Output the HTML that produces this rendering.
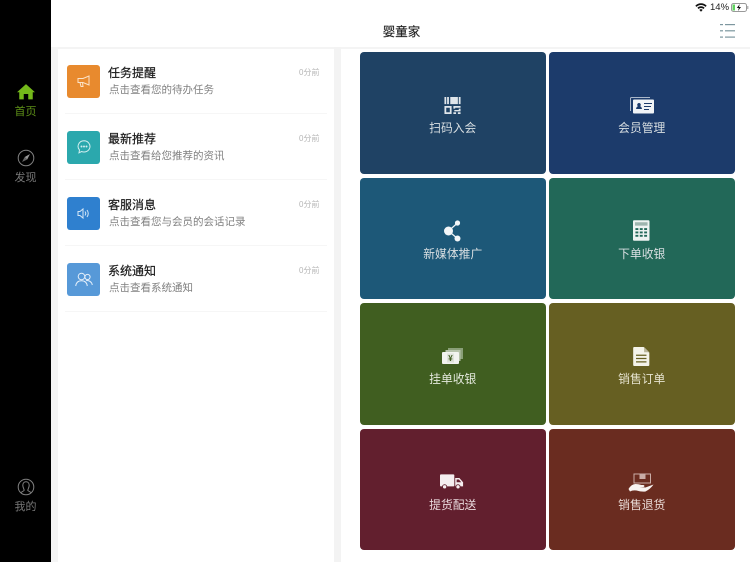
<!DOCTYPE html>
<html lang="zh">
<head>
<meta charset="utf-8">
<style>
*{margin:0;padding:0;box-sizing:border-box}
html{background:#fff}
html,body{width:750px;height:562px;overflow:hidden;font-family:"Liberation Sans","Noto Sans CJK SC",sans-serif}
body{background:#fff;position:relative;filter:blur(.3px)}
.a{position:absolute}
#side{left:0;top:0;width:51px;height:562px;background:#000}
.nav{left:0;width:51px;text-align:center;font-size:11px;line-height:14px;color:#777}
#left{left:51px;top:47px;width:7px;height:515px;background:#f5f5f5}
#midtop{left:51px;top:47px;width:699px;height:1.5px;background:#f4f4f4}
#mid{left:334px;top:47px;width:7px;height:515px;background:#f3f3f3}
.title{left:52px;top:23px;width:699px;text-align:center;font-size:12.5px;line-height:18px;color:#222;-webkit-text-stroke:.15px #222}
.ic{left:67px;width:33px;height:33px;border-radius:3px}
.h{left:108px;font-size:12px;line-height:16px;color:#1a1a1a;-webkit-text-stroke:.2px #1a1a1a}
.s{left:109px;font-size:10.5px;line-height:14px;color:#808080}
.t{left:299px;font-size:8px;line-height:12px;color:#b5b5b5}
.ln{left:65px;width:262px;height:1px;background:#f6f6f6}
.tile{width:185.5px;height:121.5px;border-radius:4px}
.tl{text-align:center;width:185.5px;font-size:11.8px;line-height:16px;color:#d9dfe2;top:68px;left:0}
.tile svg{position:absolute}
</style>
</head>
<body>
<div class="a" id="side"></div>
<svg class="a" style="left:17px;top:84px" width="18" height="15.500" viewBox="0 0 20 17"><path fill="#74b81a" d="M10 0 L20 9 L17.500 9 L17.500 17 L12.500 17 L12.500 11 L7.500 11 L7.500 17 L2.500 17 L2.500 9 L0 9Z"/></svg>
<div class="a nav" style="top:105px;color:#5f9218">首页</div>
<svg class="a" style="left:17px;top:149px" width="18" height="18" viewBox="0 0 18 18"><circle cx="9" cy="9" r="7.800" fill="none" stroke="#808080" stroke-width="1"/><path fill="#999" d="M13 5 L10.200 10.500 L7.700 8Z"/><path fill="#666" d="M5 13 L7.700 8 L10.200 10.500Z"/></svg>
<div class="a nav" style="top:171px">发现</div>
<svg class="a" style="left:17px;top:478px" width="18" height="18" viewBox="0 0 18 18" fill="none" stroke="#808080" stroke-width="1"><circle cx="9" cy="9" r="7.800"/><path d="M7.200 12.500 C7.200 11 5.800 9.500 5.800 7.200 C5.800 5 7.200 3.800 9 3.800 C10.800 3.800 12.200 5 12.200 7.200 C12.200 9.500 10.800 11 10.800 12.500 L14 14.500 M7.200 12.500 L4 14.500"/></svg>
<div class="a nav" style="top:500px">我的</div>

<div class="a" id="midtop"></div>
<div class="a" id="left"></div>
<div class="a" id="mid"></div>
<div class="a title">婴童家</div>

<svg class="a" style="left:695px;top:3px" width="12" height="9" viewBox="0 0 12 9"><path fill="#111" d="M6 8.800 L4.300 6.900 A2.500 2.500 0 0 1 7.700 6.900Z M6 3.200 A5 5 0 0 1 9.600 4.800 L8.500 6 A3.500 3.500 0 0 0 3.500 6 L2.400 4.800 A5 5 0 0 1 6 3.200Z M6 .3 A8 8 0 0 1 11.700 2.700 L10.500 3.900 A6.300 6.300 0 0 0 1.500 3.900 L.3 2.700 A8 8 0 0 1 6 .3Z"/></svg>
<div class="a" style="left:710px;top:1px;font-size:9.500px;line-height:13px;color:#222">14%</div>
<svg class="a" style="left:731px;top:3px" width="18" height="9" viewBox="0 0 18 9"><rect x=".5" y=".5" width="15" height="8" rx="2" fill="#fff" stroke="#999"/><rect x="1.500" y="1.500" width="2.500" height="6" fill="#5fd35f"/><path fill="#111" d="M8.800 1 L5.800 5 L7.800 5 L7 8 L10 4 L8 4Z"/><rect x="16.300" y="3" width="1" height="3" fill="#999"/></svg>

<svg class="a" style="left:720px;top:24px" width="15" height="14" viewBox="0 0 15 14" fill="#7d979f"><rect x="0" y="0" width="3" height="1.200"/><rect x="5" y="0" width="10" height="1.200"/><rect x="0" y="6.200" width="3" height="1.200"/><rect x="5" y="6.200" width="10" height="1.200"/><rect x="0" y="12.500" width="3" height="1.200"/><rect x="5" y="12.500" width="10" height="1.200"/></svg>

<div class="a ic" style="top:64.500px;background:#e88a2e"></div>
<svg class="a" style="left:77px;top:75px" width="14" height="13" viewBox="0 0 14 13" fill="none" stroke="#fbe3c8" stroke-width="1"><path d="M1 3.500 H6 L12 1 V10 L6 7.500 H1Z M3 7.500 L4 11.500 H6 L5.500 7.500"/></svg>
<div class="a h" style="top:65px">任务提醒</div>
<div class="a s" style="top:83px">点击查看您的待办任务</div>
<div class="a t" style="top:67px">0分前</div>
<div class="a ln" style="top:113px"></div>

<div class="a ic" style="top:130.700px;background:#2ba8ad"></div>
<svg class="a" style="left:77px;top:140px" width="14" height="14" viewBox="0 0 14 14" fill="none" stroke="#d2eeef" stroke-width="1"><path d="M7 .8 A6 5.600 0 1 1 4.500 11.500 L2 12.800 L2.500 10 A6 5.600 0 0 1 7 .8Z"/><circle cx="4.500" cy="6.500" r=".5"/><circle cx="7" cy="6.500" r=".5"/><circle cx="9.500" cy="6.500" r=".5"/></svg>
<div class="a h" style="top:131px">最新推荐</div>
<div class="a s" style="top:149px">点击查看给您推荐的资讯</div>
<div class="a t" style="top:133px">0分前</div>
<div class="a ln" style="top:179px"></div>

<div class="a ic" style="top:196.700px;background:#2f80cf"></div>
<svg class="a" style="left:77px;top:206.500px" width="14" height="13" viewBox="0 0 14 13" fill="none" stroke="#d4e6f6" stroke-width="1"><path d="M1 4.500 H3 L6 2 V11 L3 8.500 H1Z M8 4.500 Q9.500 6.500 8 8.500 M10 3 Q12.500 6.500 10 10"/></svg>
<div class="a h" style="top:197px">客服消息</div>
<div class="a s" style="top:215px">点击查看您与会员的会话记录</div>
<div class="a t" style="top:199px">0分前</div>
<div class="a ln" style="top:245px"></div>

<div class="a ic" style="top:262.700px;background:#5799d8"></div>
<svg class="a" style="left:75px;top:272px" width="18" height="15" viewBox="0 0 18 15" fill="none" stroke="#e4effa" stroke-width="1"><circle cx="6.500" cy="4.500" r="3.300"/><circle cx="12.500" cy="5" r="2.600"/><path d="M.7 14 C1.200 10.500 3.500 8.800 6.500 8.800 C9.500 8.800 11.800 10.500 12.300 14 M11 8.700 C14 8 16.800 10 17.300 13"/></svg>
<div class="a h" style="top:263px">系统通知</div>
<div class="a s" style="top:281px">点击查看系统通知</div>
<div class="a t" style="top:265px">0分前</div>
<div class="a ln" style="top:311px"></div>

<div class="a tile" style="left:360px;top:52px;background:#1f4264">
<svg style="left:84px;top:45px" width="17" height="17" viewBox="0 0 18 19" fill="#dfe5ea"><path d="M0 0H2V8H0Z M3 0H5V8H3Z M6.500 0H15V8H6.500Z M16 0H18V8H16Z"/><path fill-rule="evenodd" d="M0 10H8V19H0Z M2 12V17H6V12Z"/><path d="M10 10H18V12H12V13H10Z M16 13H18V16H11V14.500H16Z M10 17H13V19H10Z M15 17H18V19H15Z"/></svg>
<div class="a tl">扫码入会</div></div>

<div class="a tile" style="left:549px;top:52px;background:#1c3b6b">
<svg style="left:81px;top:45px" width="24" height="17" viewBox="0 0 24 17"><path fill="none" stroke="#aab7c9" d="M.5 14 V1.500 Q.5 .5 1.500 .5 H20"/><rect x="3" y="2.500" width="21" height="14" rx="1" fill="#f0f3f6"/><path fill="#1c3b6b" d="M6 12 Q6.500 9.500 8 9.300 A1.800 1.800 0 1 1 10 9.300 Q11.500 9.500 12 12Z M14 6H22V7H14Z M14 9H21V10H14Z M14 12H19V13H14Z"/></svg>
<div class="a tl">会员管理</div></div>

<div class="a tile" style="left:360px;top:177.500px;background:#1d5878">
<svg style="left:84px;top:42.500px" width="17" height="22" viewBox="0 0 17 22" fill="#f3f6f8"><circle cx="4.500" cy="11" r="4.500"/><circle cx="13.500" cy="3" r="2.600"/><circle cx="13.500" cy="18.500" r="3"/><path stroke="#f3f6f8" stroke-width="1.200" d="M4.500 11L13.500 3M4.500 11L13.500 18.500"/></svg>
<div class="a tl">新媒体推广</div></div>

<div class="a tile" style="left:549px;top:177.500px;background:#226858">
<svg style="left:84px;top:42.500px" width="16.500" height="21" viewBox="0 0 17 21"><rect width="17" height="21" rx="1" fill="#eef3f1"/><rect x="2" y="2" width="13" height="3.500" fill="#9db5ae"/><path fill="#226858" d="M2.500 8H5.500V10H2.500Z M7 8H10V10H7Z M11.500 8H14.500V10H11.500Z M2.500 11.500H5.500V13.500H2.500Z M7 11.500H10V13.500H7Z M11.500 11.500H14.500V13.500H11.500Z M2.500 15H5.500V17H2.500Z M7 15H10V17H7Z M11.500 15H14.500V17H11.500Z"/></svg>
<div class="a tl">下单收银</div></div>

<div class="a tile" style="left:360px;top:303px;background:#405e20">
<svg style="left:82px;top:45px" width="21" height="16" viewBox="0 0 21 16"><rect x="6" y="0" width="15" height="11" fill="#8a9f78"/><rect x="3.500" y="2" width="15" height="11" fill="#b7c4ab"/><rect x="0" y="4" width="17" height="12" rx="1" fill="#f2f4ef"/><rect x="5" y="5.500" width="7" height="9" fill="#dfe4da"/><text x="8.500" y="13" text-anchor="middle" font-size="8" font-weight="bold" fill="#405e20">¥</text></svg>
<div class="a tl" style="color:#e3e8dc">挂单收银</div></div>

<div class="a tile" style="left:549px;top:303px;background:#665f22">
<svg style="left:84px;top:44px" width="16.500" height="19" viewBox="0 0 17 20"><path fill="#f4f3ea" d="M0 1 Q0 0 1 0 H11 L17 6 V19 Q17 20 16 20 H1 Q0 20 0 19Z"/><path fill="#b9b59a" d="M11.500 0 L17 5.500 H11.500Z"/><path fill="#665f22" d="M3 8H14V9.300H3Z M3 11.500H14V12.800H3Z M3 15H14V16.300H3Z"/></svg>
<div class="a tl" style="color:#e6e3cf">销售订单</div></div>

<div class="a tile" style="left:360px;top:428.800px;background:#621f2e">
<svg style="left:80px;top:45px" width="24" height="15.500" viewBox="0 0 26 16"><rect x="0" y="0" width="15.500" height="13" rx="1" fill="#f6eef0"/><path fill="#f6eef0" d="M16.500 4H21L25 8.500V13H16.500Z"/><path fill="#621f2e" d="M18 5.500H20.500L23 8.500H18Z"/><circle cx="5" cy="13.500" r="2.300" fill="#f6eef0" stroke="#621f2e"/><circle cx="19.500" cy="13.500" r="2.300" fill="#f6eef0" stroke="#621f2e"/></svg>
<div class="a tl" style="color:#e8d8dc">提货配送</div></div>

<div class="a tile" style="left:549px;top:428.800px;background:#6a2c20">
<svg style="left:79px;top:44px" width="26" height="19" viewBox="0 0 25 19"><path fill="none" stroke="#c9aca6" d="M5.500 1H22V10H5.500Z"/><rect x="11" y="1" width="6" height="5" fill="#c9aca6"/><path fill="#f8f3f1" d="M0 16 Q3 11 7 11 Q10 11 13 12 H15 Q17 13 15 14 H11 L17 14.500 Q21 13 25 11.500 Q22 16 17 18.500 Q13 19 8 17.500 Q4 17 1.500 18.500Z"/></svg>
<div class="a tl" style="color:#e9dad6">销售退货</div></div>
</body>
</html>
